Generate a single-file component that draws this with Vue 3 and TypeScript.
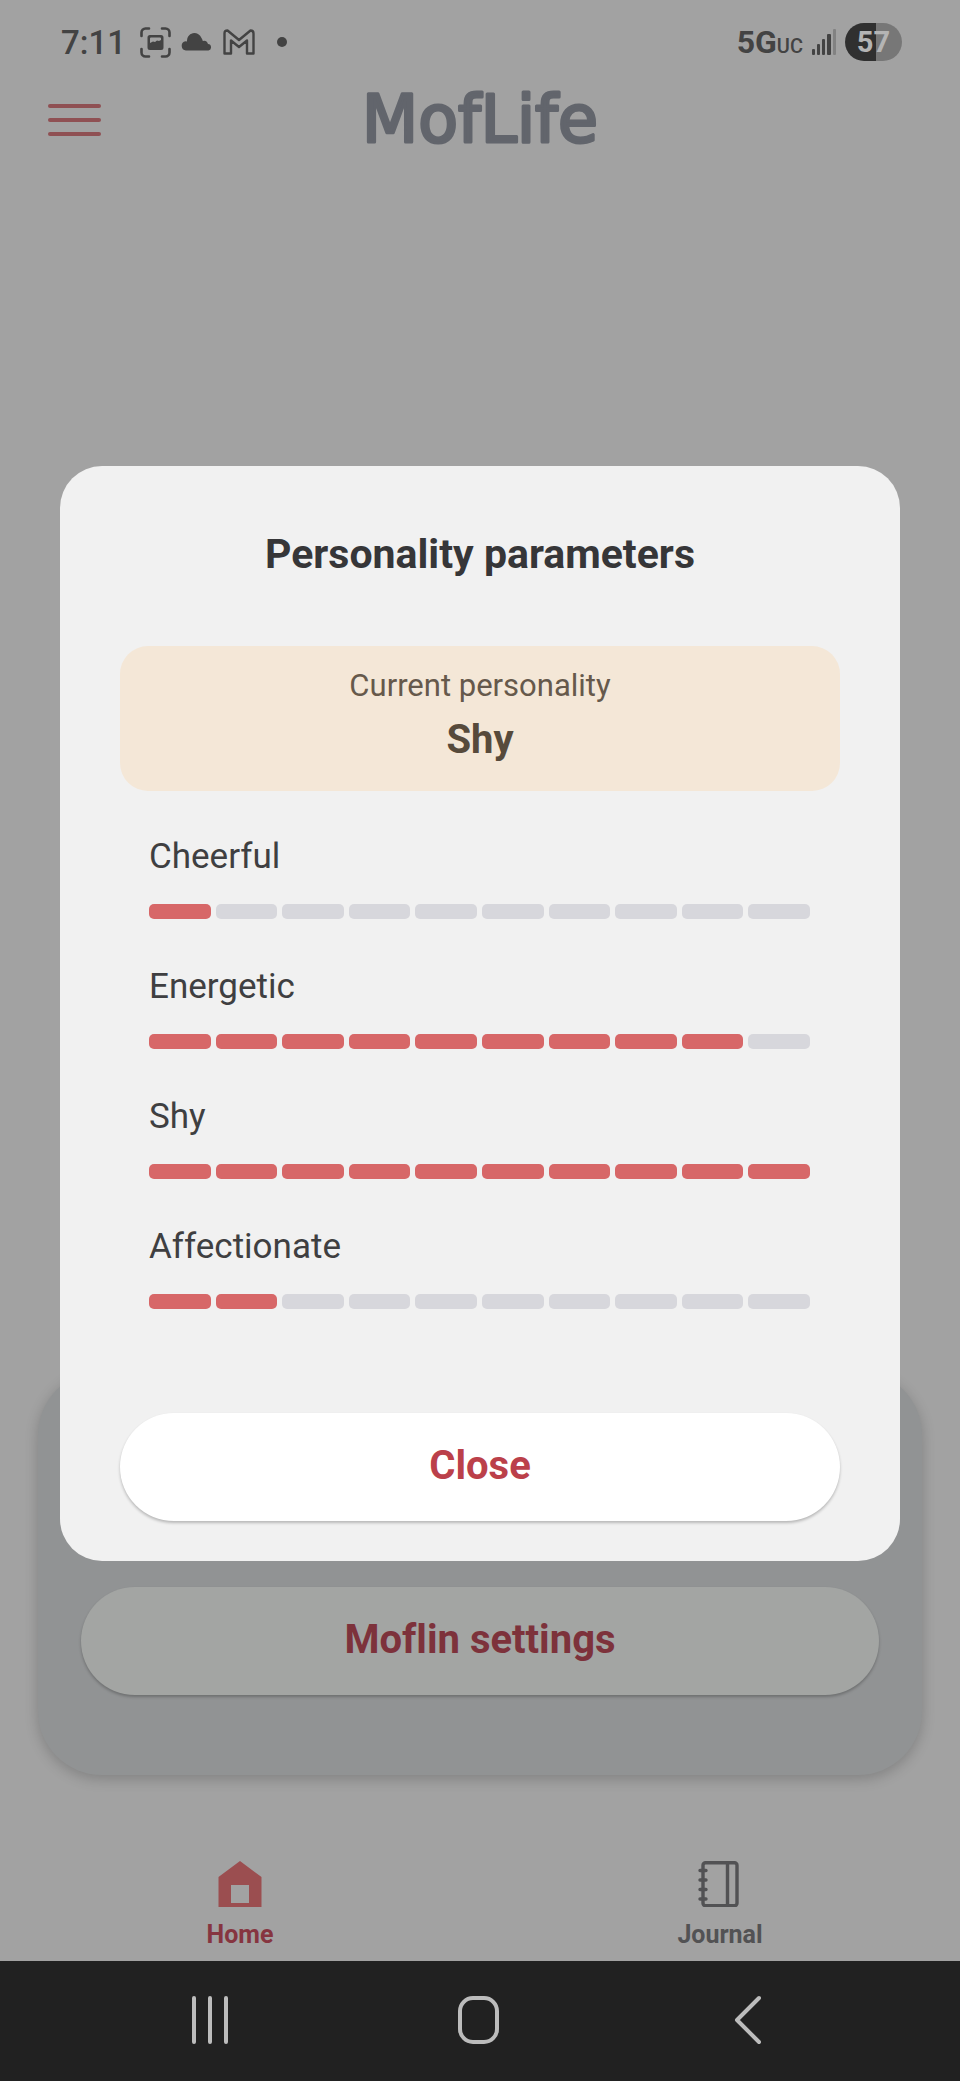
<script setup lang="ts">
interface Parameter {
  name: string
  level: number
}

const SEGMENTS = 10

const parameters: Parameter[] = [
  { name: 'Cheerful', level: 1 },
  { name: 'Energetic', level: 9 },
  { name: 'Shy', level: 10 },
  { name: 'Affectionate', level: 2 },
]
</script>

<template>
  <div class="app">
    <div class="status">
      <div class="status-group">
        <span class="time">7:11</span>
        <svg width="31" height="31" viewBox="0 0 31 31" aria-hidden="true">
          <path
            d="M1.5 9V5.5a4 4 0 0 1 4-4H9M22 1.5h3.5a4 4 0 0 1 4 4V9M29.5 22v3.5a4 4 0 0 1-4 4H22M9 29.5H5.5a4 4 0 0 1-4-4V22"
            fill="none" stroke="currentColor" stroke-width="2.6" stroke-linecap="round"
          />
          <path
            fill="currentColor" fill-rule="evenodd"
            d="M10 8h11a2.5 2.5 0 0 1 2.5 2.5v10A2.5 2.5 0 0 1 21 23H10a2.5 2.5 0 0 1-2.5-2.5v-10A2.5 2.5 0 0 1 10 8zM10 13v3l3-1.500 2 .5 2-1.500 2 .5 2-1v-1.500q0-1-1-1h-9q-1 0-1 1z"
          />
        </svg>
        <svg width="32" height="18" viewBox="0 0 32 18" aria-hidden="true">
          <path fill="currentColor" d="M5 17.5a4.7 4.7 0 0 1-.5-9.3q1 0 1.5.2A7.5 7.5 0 0 1 20.5 5q1 1.5 1.3 3 3.7-1.2 5.2 3a3.3 3.3 0 0 1 .5 6.5z" />
        </svg>
        <svg width="32" height="26" viewBox="0 0 32 26" aria-hidden="true">
          <path
            d="M1.5 4.5Q1.5 1.5 4.5 1.5L16 11 27.5 1.5Q30.5 1.5 30.5 4.5V24.5H24V11.5L16 18 8 11.5V24.5H1.5z"
            fill="none" stroke="currentColor" stroke-width="2.4" stroke-linejoin="round"
          />
        </svg>
        <svg class="more-dot" width="10" height="10" viewBox="0 0 10 10" aria-hidden="true">
          <circle cx="5" cy="5" r="5" fill="currentColor" />
        </svg>
      </div>
      <div class="status-group network-group">
        <span class="network">5G<small>UC</small></span>
        <svg width="24" height="26" viewBox="0 0 24 26" aria-hidden="true">
          <g fill="currentColor">
            <rect x="0" y="20" width="3" height="6" rx="1" />
            <rect x="5" y="15" width="3" height="11" rx="1" />
            <rect x="10" y="10" width="3" height="16" rx="1" />
            <rect x="15" y="5" width="4" height="21" rx="1" />
          </g>
          <rect x="21" y="0" width="3" height="26" rx="1" fill="#828282" />
        </svg>
        <span class="battery">57</span>
      </div>
    </div>

    <header class="header">
      <button class="menu" type="button" aria-label="Menu">
        <i></i><i></i><i></i>
      </button>
      <h1 class="logo">
        <svg width="290" height="90" viewBox="0 0 290 90">
          <text x="145" y="67" text-anchor="middle">MofLife</text>
        </svg>
      </h1>
    </header>

    <main class="panel">
      <button class="pill pill-dim" type="button">Moflin settings</button>
    </main>

    <nav class="tabs">
      <a class="tab tab-active" href="#home">
        <svg width="44" height="46" viewBox="0 0 44 46" aria-hidden="true">
          <path fill="#9b4e50" fill-rule="evenodd" d="M22 0 43.5 16V46H.5V16zM13 24V42H31V24z" />
        </svg>
        <span>Home</span>
      </a>
      <a class="tab" href="#journal">
        <svg width="44" height="46" viewBox="0 0 44 46" aria-hidden="true">
          <g fill="none" stroke="currentColor" stroke-width="3.4" stroke-linecap="round">
            <rect x="5" y="1.7" width="34" height="43" rx="2.5" />
            <path d="M29.5 2v42M2 9.5h6M2 19h6M2 28.5h6M2 38h6" />
          </g>
        </svg>
        <span>Journal</span>
      </a>
    </nav>

    <div class="system-nav">
      <button type="button" aria-label="Recent apps">
        <svg width="50" height="50" viewBox="0 0 50 50">
          <path d="M9 3v44M25 3v44M41 3v44" />
        </svg>
      </button>
      <button type="button" aria-label="Home screen">
        <svg width="50" height="50" viewBox="0 0 50 50">
          <rect x="5" y="3" width="37" height="44" rx="13" />
        </svg>
      </button>
      <button type="button" aria-label="Back">
        <svg width="50" height="50" viewBox="0 0 50 50">
          <path d="M34 3 12 25 34 47" />
        </svg>
      </button>
    </div>

    <div class="overlay">
      <section class="dialog" role="dialog" aria-modal="true" aria-labelledby="dialog-title">
        <h2 id="dialog-title">Personality parameters</h2>
        <div class="current">
          <p>Current personality</p>
          <strong>Shy</strong>
        </div>
        <ul class="list">
          <li v-for="item in parameters" :key="item.name">
            <span class="label">{{ item.name }}</span>
            <div
              class="meter" role="meter" :aria-label="item.name"
              :aria-valuenow="item.level" aria-valuemin="0" :aria-valuemax="SEGMENTS"
            >
              <span v-for="n in SEGMENTS" :key="n" class="segment" :class="{ filled: n <= item.level }"></span>
            </div>
          </li>
        </ul>
        <button class="pill" type="button">Close</button>
      </section>
    </div>
  </div>
</template>

<style>
body {
  margin: 0;
  background: #a2a2a2;
}
</style>

<style scoped>
* {
  box-sizing: border-box;
}

.app {
  position: relative;
  display: flex;
  flex-direction: column;
  min-height: 100vh;
  background: #a2a2a2;
  color: #434343;
  font-family: Roboto, "Liberation Sans", sans-serif;
}

button {
  margin: 0;
  padding: 0;
  border: 0;
  background: none;
  font-family: inherit;
  font-variant-ligatures: none;
}

svg {
  display: block;
}

.status {
  display: flex;
  justify-content: space-between;
  height: 75px;
  padding: 9px 58px 0 61px;
}

.status-group {
  display: flex;
  align-items: center;
  gap: 10px;
}

.time {
  margin-right: 4px;
  font-size: 33px;
  font-weight: 500;
}

.more-dot {
  margin-left: 12px;
}

.network {
  font-size: 32px;
  font-weight: 700;
}

.network small {
  font-size: 20px;
  font-weight: 500;
}

.network-group {
  gap: 9px;
}

.battery {
  width: 57px;
  border-radius: 19px;
  background: linear-gradient(90deg, #303030 55%, #777777 55%);
  color: #b4b4b4;
  font-size: 29px;
  font-weight: 700;
  line-height: 38px;
  text-align: center;
}

.header {
  display: grid;
  grid-template-columns: 53px 1fr 53px;
  align-items: center;
  height: 90px;
  padding: 0 48px;
}

.menu {
  display: grid;
  gap: 10px;
}

.menu i {
  height: 4px;
  border-radius: 2px;
  background: #8f5053;
}

.logo {
  display: flex;
  justify-content: center;
  margin: 0;
}

.logo text {
  fill: #62656c;
  stroke: #62656c;
  stroke-width: 3px;
  stroke-linejoin: round;
  font-family: "DejaVu Sans", sans-serif;
  font-size: 65px;
  font-weight: 400;
}

.panel {
  margin: auto 38px 0;
  padding: 216px 43px 80px;
  border-radius: 64px;
  background: #919394;
  box-shadow: 0 4px 14px rgba(0, 0, 0, 0.2);
}

.pill {
  display: block;
  width: 100%;
  height: 108px;
  padding-bottom: 3px;
  border-radius: 54px;
  background: #ffffff;
  box-shadow: 0 2px 3px rgba(0, 0, 0, 0.24);
  color: #bb404a;
  font-size: 40px;
  font-weight: 700;
}

.pill-dim {
  background: #a3a5a3;
  color: #7d323b;
}

.tabs {
  display: grid;
  grid-template-columns: 1fr 1fr;
  height: 186px;
  padding-top: 86px;
}

.tab {
  display: flex;
  flex-direction: column;
  align-items: center;
  gap: 12px;
  color: #525254;
  font-size: 25px;
  font-weight: 700;
  line-height: 32px;
  text-decoration: none;
}

.tab-active {
  color: #863540;
}

.system-nav {
  display: grid;
  grid-template-columns: repeat(3, 1fr);
  height: 120px;
  padding: 0 75px 2px;
  background: #212121;
}

.system-nav button {
  display: flex;
  align-items: center;
  justify-content: center;
}

.system-nav svg {
  fill: none;
  stroke: #bcbcbc;
  stroke-width: 4px;
  stroke-linecap: round;
  stroke-linejoin: round;
}

.overlay {
  position: absolute;
  inset: 0;
  display: flex;
  align-items: center;
  padding: 64px 60px 119px;
}

.dialog {
  flex: 1;
  padding: 64px 60px 40px;
  border-radius: 42px;
  background: #f1f1f1;
}

h2 {
  margin: 0 0 68px;
  color: #363638;
  font-size: 41px;
  font-weight: 700;
  line-height: 48px;
  text-align: center;
}

.current {
  display: flex;
  flex-direction: column;
  align-items: center;
  gap: 12px;
  padding: 22px 0 27px;
  border-radius: 28px;
  background: #f4e7d7;
  color: #66594b;
}

.current p {
  margin: 0;
  font-size: 31px;
  line-height: 36px;
}

.current strong {
  color: #574a3b;
  font-size: 40px;
  line-height: 48px;
}

.list {
  display: grid;
  gap: 47px;
  margin: 45px 0 104px;
  padding: 0 30px 0 29px;
  list-style: none;
}

.label {
  display: block;
  margin-bottom: 27px;
  color: #3f3f41;
  font-size: 35px;
  line-height: 41px;
}

.meter {
  display: flex;
  gap: 5px;
}

.segment {
  flex: 1;
  height: 15px;
  border-radius: 5px;
  background: #d7d7dc;
}

.filled {
  background: #d76768;
}
</style>
